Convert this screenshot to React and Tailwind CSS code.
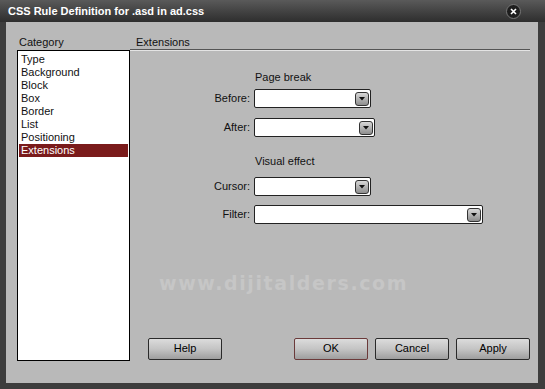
import React from 'react';

const categories = ['Type', 'Background', 'Block', 'Box', 'Border', 'List', 'Positioning', 'Extensions'];

const Arrow = () => (
  <div className="w-[14px] h-[14px] rounded-[3px] border border-[#333] bg-gradient-to-b from-[#d8d8d8] to-[#8e8e8e] flex items-center justify-center">
    <svg width="6" height="4" viewBox="0 0 6 4">
      <path d="M0 0 L6 0 L3 3.5 Z" fill="#111" />
    </svg>
  </div>
);

const Select = ({ width }) => (
  <div className={`h-[19px] ${width} bg-white border border-[#222] rounded-[2px] flex items-center justify-end pr-[1px]`}>
    <Arrow />
  </div>
);

const Row = ({ label, width }) => (
  <div className="flex items-center">
    <div className="w-[122px] text-right pr-[4px]">{label}</div>
    <Select width={width} />
  </div>
);

const Btn = ({ children, ok }) => (
  <div
    className={`w-[74px] h-[22px] shrink-0 rounded-[2px] border ${ok ? 'border-[#6b3a3a]' : 'border-[#2a2a2a]'} bg-gradient-to-b from-[#dcdcdc] via-[#c4c4c4] to-[#9e9e9e] flex items-center justify-center text-[11px] text-black`}
  >
    {children}
  </div>
);

export default function App() {
  return (
    <div
      className="w-[545px] h-[389px] bg-[#3d3d3d] flex flex-col text-[11px] text-[#111]"
      style={{ fontFamily: '"Liberation Sans", Arial, sans-serif' }}
    >
      <div className="h-[22px] shrink-0 bg-gradient-to-b from-[#5a5a5a] to-[#2e2e2e] flex items-center justify-between pl-[8px] pr-[24px]">
        <span className="text-white font-bold text-[11px]">CSS Rule Definition for .asd in ad.css</span>
        <div className="w-[15px] h-[15px] rounded-full bg-[#1e1e1e] border border-[#777] flex items-center justify-center">
          <svg width="7" height="7" viewBox="0 0 7 7">
            <path d="M1 1 L6 6 M6 1 L1 6" stroke="#fff" strokeWidth="1.6" />
          </svg>
        </div>
      </div>
      <div className="flex-1 ml-[6px] mr-[7px] mb-[6px] bg-[#b9b9b9] flex pt-[12px] pl-[11px]">
        <div className="w-[113px] shrink-0 flex flex-col">
          <div className="pl-[2px] h-[16px]">Category</div>
          <div className="w-[113px] h-[311px] bg-white border border-black pt-[2px] px-[1px]">
            {categories.map((c) => (
              <div
                key={c}
                className={`h-[13px] leading-[13px] pl-[2px] ${c === 'Extensions' ? 'bg-[#7a1b1b] text-white' : ''}`}
              >
                {c}
              </div>
            ))}
          </div>
        </div>
        <div className="flex-1 flex flex-col pr-[17px]">
          <div className="pl-[6px] h-[15px]">Extensions</div>
          <div className="h-[2px] border-t border-[#555] border-b border-b-[#e4e4e4]" />
          <div className="flex flex-col pl-[2px] pt-[18px]">
            <div className="pl-[123px] h-[14px]">Page break</div>
            <div className="flex flex-col gap-[10px] mt-[6px]">
              <Row label="Before:" width="w-[117px]" />
              <Row label="After:" width="w-[121px]" />
            </div>
            <div className="pl-[123px] h-[14px] mt-[16px]">Visual effect</div>
            <div className="flex flex-col gap-[9px] mt-[10px]">
              <Row label="Cursor:" width="w-[117px]" />
              <Row label="Filter:" width="w-[229px]" />
            </div>
            <div className="mt-[45px] ml-[27px] text-[19px] font-bold tracking-[1.6px] text-[#c6c6c6]" style={{ fontFamily: '"DejaVu Sans", sans-serif' }}>
              www.dijitalders.com
            </div>
            <div className="flex mt-[40px] ml-[16px]">
              <Btn>Help</Btn>
              <div className="ml-[72px] flex gap-[7px]">
                <Btn ok>OK</Btn>
                <Btn>Cancel</Btn>
                <Btn>Apply</Btn>
              </div>
            </div>
          </div>
        </div>
      </div>
    </div>
  );
}
